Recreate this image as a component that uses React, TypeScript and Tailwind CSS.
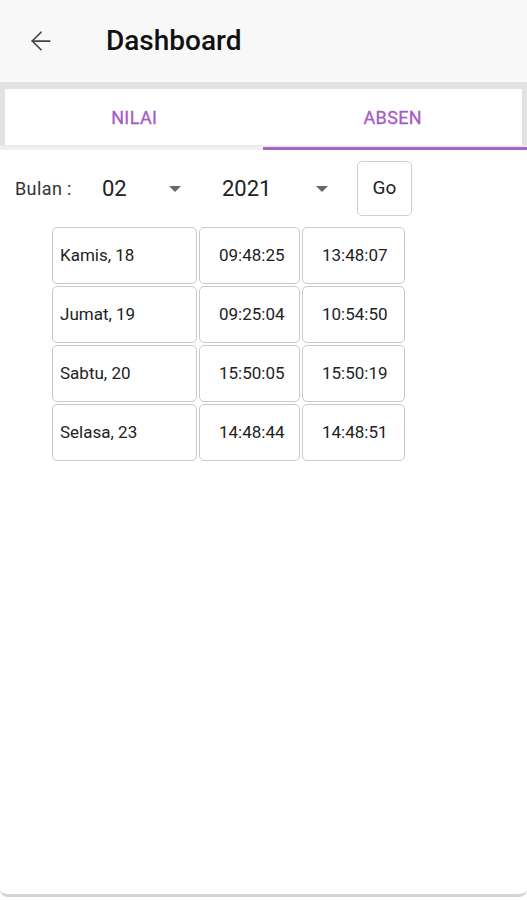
import { ArrowLeft } from 'lucide-react';

const rows = [
    { day: 'Kamis, 18', masuk: '09:48:25', pulang: '13:48:07' },
    { day: 'Jumat, 19', masuk: '09:25:04', pulang: '10:54:50' },
    { day: 'Sabtu, 20', masuk: '15:50:05', pulang: '15:50:19' },
    { day: 'Selasa, 23', masuk: '14:48:44', pulang: '14:48:51' },
];

const Caret = () => (
    <span className="block w-0 h-0 border-l-[6px] border-r-[6px] border-t-[6px] border-l-transparent border-r-transparent border-t-[#666]" />
);

const App = () => {
    return (
        <div className="h-[900px] flex flex-col bg-white font-['Roboto',sans-serif]">
            {/* Toolbar */}
            <div className="h-[82px] bg-[#f8f8f8] flex items-center flex-shrink-0">
                <button className="ml-[26px] text-[#444]">
                    <ArrowLeft size={30} strokeWidth={1.4} />
                </button>
                <span className="ml-[50px] text-[28px] font-medium text-[#111]">Dashboard</span>
            </div>

            {/* Tabs */}
            <div className="bg-[#e2e2e2] flex-shrink-0">
                <div className="px-[5px] pt-[7px]">
                    <div className="h-[56px] bg-white flex">
                        <div className="flex-1 flex items-center justify-center text-[18px] text-[#a45cc4] tracking-[0.4px] [-webkit-text-stroke:0.3px_#a45cc4]">NILAI</div>
                        <div className="flex-1 flex items-center justify-center text-[18px] text-[#a45cc4] tracking-[0.4px] [-webkit-text-stroke:0.3px_#a45cc4]">ABSEN</div>
                    </div>
                </div>
                <div className="h-[2px] bg-[#ececec]" />
                <div className="flex h-[3px]">
                    <div className="w-[263px] bg-[#f0f0f0]" />
                    <div className="flex-1 bg-[#a764c8]" />
                </div>
            </div>

            {/* Content */}
            <div className="flex-1 bg-white rounded-b-[8px] border-b-[3px] border-[#d4d4d4] mb-[3px]">
                {/* Filter */}
                <div className="flex items-center h-[55px] mt-[11px] pl-[15px]">
                    <span className="w-[87px] text-[18px] tracking-[0.4px] text-[#333]">Bulan :</span>
                    <div className="w-[120px] flex items-center">
                        <span className="w-[67px] text-[22px] text-[#222]">02</span>
                        <Caret />
                    </div>
                    <div className="w-[135px] flex items-center">
                        <span className="w-[94px] text-[22px] text-[#222]">2021</span>
                        <Caret />
                    </div>
                    <button className="w-[55px] h-[55px] border border-[#cfcfcf] rounded-[5px] text-[19px] text-[#222]">Go</button>
                </div>

                {/* Attendance table */}
                <div className="ml-[52px] mt-[11px] grid grid-cols-[145px_101px_103px] gap-[2px] w-fit">
                    {rows.map((r) => (
                        <div key={r.day} className="contents">
                            <div className="h-[57px] border border-[#c9c9c9] rounded-[5px] flex items-center pl-[7px] text-[17px] text-[#222]">{r.day}</div>
                            <div className="h-[57px] border border-[#c9c9c9] rounded-[5px] flex items-center pl-[19px] text-[17px] text-[#222]">{r.masuk}</div>
                            <div className="h-[57px] border border-[#c9c9c9] rounded-[5px] flex items-center pl-[19px] text-[17px] text-[#222]">{r.pulang}</div>
                        </div>
                    ))}
                </div>
            </div>
        </div>
    );
};

export default App;
